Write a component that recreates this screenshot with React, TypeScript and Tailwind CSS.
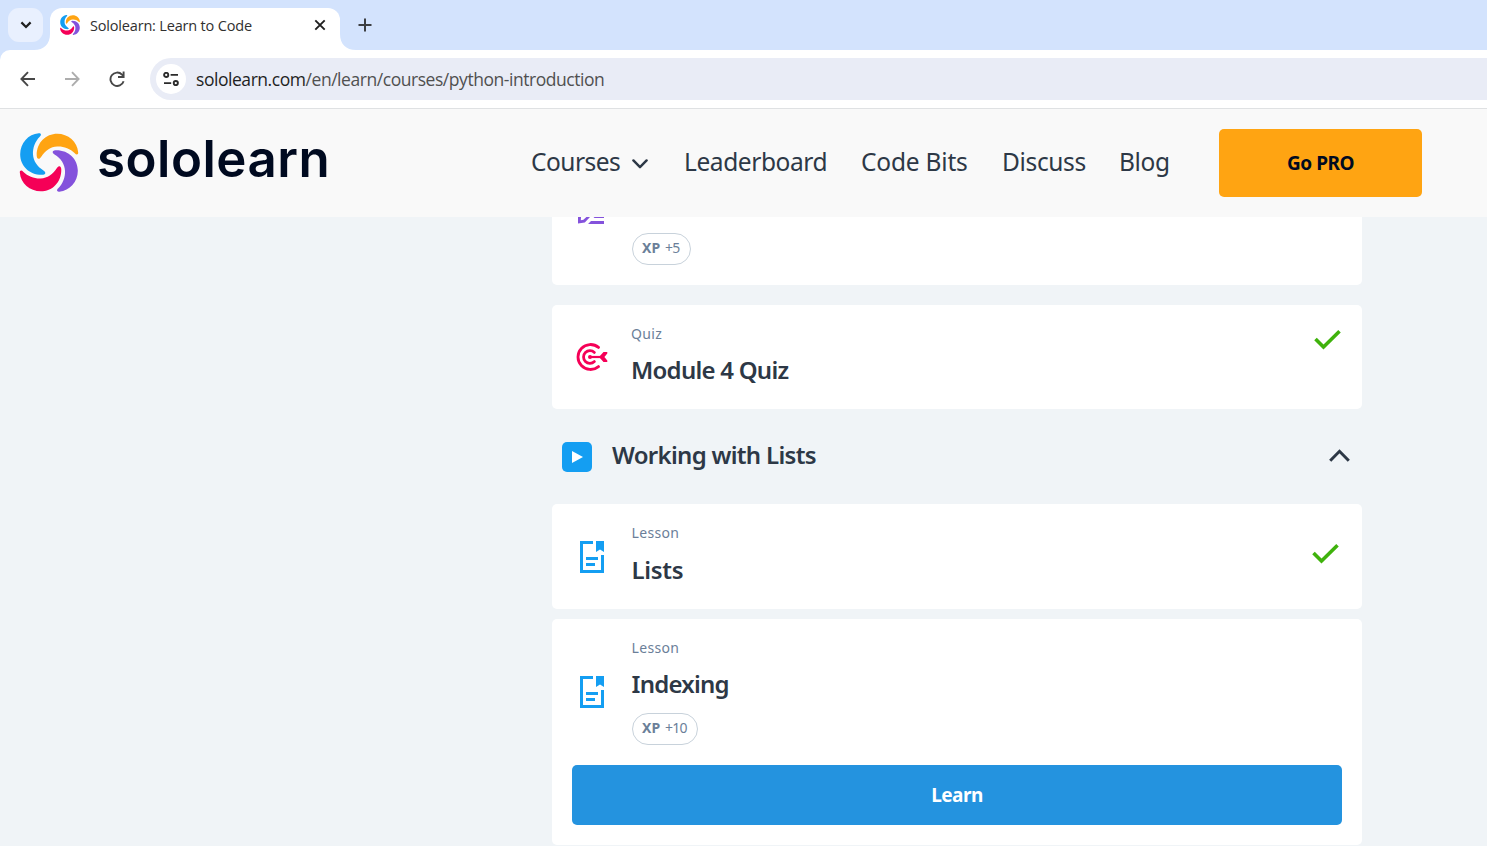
import type { ReactNode } from "react";

const PETAL =
  "M51 66 C51 28 78 2 112 2 C144 2 172 26 174 57 C175 64 169 66 164 60 C150 46 130 39 112 40 C92 41 76 52 64 71 C58 80 51 78 51 66Z";

function Swirl({ className }: { className: string }) {
  return (
    <svg viewBox="0 0 175 175" className={className}>
      <path d={PETAL} fill="#ffa412" />
      <path d={PETAL} fill="#8452dc" transform="rotate(90 87.5 87.5)" />
      <path d={PETAL} fill="#f50057" transform="rotate(180 87.5 87.5)" />
      <path d={PETAL} fill="#149ef2" transform="rotate(270 87.5 87.5)" />
    </svg>
  );
}

function TabStrip() {
  return (
    <div className="flex h-[50px] shrink-0 bg-[#d3e3fd] pl-2 pt-2">
      <button className="flex h-[34px] w-[35px] items-center justify-center rounded-[11px] bg-[#e9f0fe]">
        <svg viewBox="0 0 12 8" className="h-2 w-3" fill="none" stroke="#1f1f1f" strokeWidth="2.2">
          <path d="M1.4 1.4 6 6l4.6-4.6" />
        </svg>
      </button>
      <div className="flex h-[42px] items-end">
        <svg viewBox="0 0 16 16" className="ml-[-9px] h-4 w-4" fill="#fff">
          <path d="M16 0V16H0C10 16 16 10 16 0Z" />
        </svg>
      </div>
      <div className="flex h-[42px] w-[290px] items-center rounded-t-[12px] bg-white pb-[8px] pl-[10px]">
        <Swirl className="h-5 w-5" />
        <span className="ml-[10px] w-[200px] whitespace-nowrap pt-px font-['Open_Sans',sans-serif] text-[14.5px] tracking-[-0.18px] text-[#303030]">
          Sololearn: Learn to Code
        </span>
        <svg viewBox="0 0 12 12" className="ml-6 h-3 w-3" fill="none" stroke="#1f1f1f" strokeWidth="1.9">
          <path d="M1.3 1.3 10.7 10.7M10.7 1.3 1.3 10.7" />
        </svg>
      </div>
      <div className="flex h-[42px] items-end">
        <svg viewBox="0 0 16 16" className="h-4 w-4" fill="#fff">
          <path d="M0 0V16H16C6 16 0 10 0 0Z" />
        </svg>
      </div>
      <svg viewBox="0 0 14 14" className="ml-[2px] mt-[10px] h-[14px] w-[14px]" fill="none" stroke="#3c3f43" strokeWidth="2">
        <path d="M7 .5v13M.5 7h13" />
      </svg>
    </div>
  );
}

function Toolbar() {
  return (
    <div className="h-[59px] shrink-0 bg-[#d3e3fd]">
      <div className="flex h-[59px] items-start rounded-tl-[10px] border-b border-[#dfe1e3] bg-white pl-5 pt-2">
        <svg viewBox="0 0 16 16" className="mt-[12.5px] h-4 w-4" fill="none" stroke="#474747" strokeWidth="1.9">
          <path d="M15 8H1.8M8 1.2 1.4 8 8 14.8" />
        </svg>
        <svg viewBox="0 0 16 16" className="ml-7 mt-[12.5px] h-4 w-4" fill="none" stroke="#adadad" strokeWidth="1.9">
          <path d="M1 8h13.2M8 1.2 14.6 8 8 14.8" />
        </svg>
        <svg viewBox="0 0 16 16" className="ml-[29px] mt-[12.5px] h-4 w-4" fill="none" stroke="#474747" strokeWidth="1.9">
          <path d="M14.6 10.2A6.7 6.7 0 1 1 13 3.6L14.4 5M14.6.4V6H9" />
        </svg>
        <div className="ml-[25px] flex h-[42px] flex-1 items-center rounded-l-full bg-[#e9ecf6] pl-[6px]">
          <div className="flex h-[30px] w-[30px] items-center justify-center rounded-full bg-white">
            <svg viewBox="0 0 16 14" className="h-[14px] w-4" fill="none" stroke="#2b2b2b" strokeWidth="1.9">
              <circle cx="3.2" cy="2.9" r="2.1" />
              <path d="M7.6 2.9H15M1 11.1H8.2" />
              <circle cx="12.8" cy="11.1" r="2.1" />
            </svg>
          </div>
          <span className="ml-[10px] whitespace-nowrap font-['Open_Sans',sans-serif] text-[17.5px] tracking-[-0.45px] text-[#505050]">
            <span className="text-[#1f1f1f]">sololearn.com</span>/en/learn/courses/python-introduction
          </span>
        </div>
      </div>
    </div>
  );
}

function SiteHeader() {
  return (
    <header className="flex h-[108px] shrink-0 items-center bg-[#f9f9f9] pl-[19px]">
      <Swirl className="mt-[-1px] h-[59px] w-[60px]" />
      <span className="ml-[18px] mt-[-9px] w-[434px] whitespace-nowrap font-[Inter,sans-serif] text-[51px] font-semibold leading-none tracking-[0.5px] text-[#000a20]">
        sololearn
      </span>
      <nav className="mt-[-2px] flex w-[688px] items-center whitespace-nowrap font-['Noto_Sans',sans-serif] text-[24.5px] tracking-[-0.35px] text-[#2d3846]">
        <span className="w-[101px] tracking-[-0.5px]">Courses</span>
        <svg viewBox="0 0 16 10" className="mt-[3px] h-[10px] w-4" fill="none" stroke="#2d3846" strokeWidth="2.4" strokeLinecap="round" strokeLinejoin="round">
          <path d="M1.4 1.4 8 8.2l6.6-6.8" />
        </svg>
        <span className="ml-9 w-[177px] tracking-[-0.42px]">Leaderboard</span>
        <span className="w-[141px] tracking-[-0.2px]">Code Bits</span>
        <span className="w-[117px]">Discuss</span>
        <span>Blog</span>
      </nav>
      <button className="flex h-[68px] w-[203px] items-center justify-center rounded-[5px] bg-[#ffa412] font-['Noto_Sans',sans-serif] text-[19px] font-bold tracking-[-0.5px] text-[#000a20]">
        Go PRO
      </button>
    </header>
  );
}

function XpPill({ amount, className }: { amount: string; className: string }) {
  return (
    <div className={`flex h-8 items-center gap-[5px] rounded-[16px] border border-[#c8d2db] pb-[2px] pl-[9px] font-['Noto_Sans',sans-serif] text-[14px] leading-none text-[#6b7f99] ${className}`}>
      <span className="font-bold">XP</span>
      <span className="tracking-[-0.8px]">{amount}</span>
    </div>
  );
}

function Check() {
  return (
    <svg viewBox="0 0 27 20" className="h-5 w-[27px]" fill="none" stroke="#3fb20c" strokeWidth="3.6">
      <path d="M1.5 9 9.5 17 25.5 1.3" />
    </svg>
  );
}

function LessonIcon() {
  return (
    <svg viewBox="0 0 24 32" className="h-8 w-6" fill="none" stroke="#149ef2" strokeWidth="3">
      <path d="M13 1.5H1.5V30.5H22.5V14M6 17.5H18M6 23.5H15" />
      <path d="M16 0H24V11L20 8.5L16 11Z" fill="#149ef2" stroke="none" />
    </svg>
  );
}

function QuizIcon() {
  return (
    <svg viewBox="0 0 32 28" className="ml-[-0.5px] h-7 w-8" fill="none" stroke="#f50057" strokeWidth="2.8">
      <path d="M22.5 4.4A12.5 12.5 0 1 0 22.5 23.6" strokeLinecap="round" />
      <path d="M18.4 9.4A6.4 6.4 0 1 0 18.4 18.6" strokeLinecap="round" />
      <path d="M14 14H26" strokeWidth="2.2" />
      <circle cx="14" cy="14" r="2" fill="#f50057" stroke="none" />
      <path d="M23 14 27.5 9H31.3V10.6L28.4 14L31.3 17.4V19H27.5Z" fill="#f50057" stroke="none" />
    </svg>
  );
}

function CardText({ kind, title }: { kind: string; title: ReactNode }) {
  return (
    <div className="ml-[-0.5px] whitespace-nowrap font-['Noto_Sans',sans-serif]">
      <div className="text-[14px] leading-5 tracking-[0.35px] text-[#6b7f99]">{kind}</div>
      <div className="mt-[10px] text-[24px] font-semibold leading-8 tracking-[-0.75px] text-[#2d3846]">{title}</div>
    </div>
  );
}

export default function App() {
  return (
    <div className="flex h-[846px] w-full flex-col overflow-hidden bg-[#f0f4f7]">
      <TabStrip />
      <Toolbar />
      <SiteHeader />
      <main className="ml-[552px] flex w-[810px] flex-1 flex-col">
        <section className="h-[68px] shrink-0 rounded-b-[5px] bg-white">
          <div className="flex items-start pl-[26px]">
            <svg viewBox="0 0 27 7" className="h-[7px] w-[27px]" fill="#8452dc">
              <path d="M0 0H3L2.8 3.2L5.4 2.8L8.4 0H12L6.8 5.4L0 6.6Z" />
              <path d="M16.5 0H26V1H15.5ZM13 4H26V7H10Z" />
            </svg>
            <XpPill amount="+5" className="ml-[27px] mt-4 w-[59px]" />
          </div>
        </section>
        <section className="mt-5 flex h-[104px] shrink-0 items-start rounded-[5px] bg-white pl-6">
          <div className="mr-6 mt-[38px]">
            <QuizIcon />
          </div>
          <div className="mt-[19px] w-[682px]">
            <CardText kind="Quiz" title="Module 4 Quiz" />
          </div>
          <div className="mt-[25px]">
            <Check />
          </div>
        </section>
        <section className="flex h-[95px] shrink-0 items-center pl-[10px]">
          <div className="flex h-[30px] w-[30px] items-center justify-center rounded-[5px] bg-[#149ef2]">
            <svg viewBox="0 0 11 12" className="h-3 w-[11px]" fill="#fff">
              <path d="M0 0 11 6 0 12Z" />
            </svg>
          </div>
          <h2 className="ml-5 mt-[-3px] w-[717px] whitespace-nowrap font-['Noto_Sans',sans-serif] text-[24px] font-semibold tracking-[-0.7px] text-[#2d3846]">
            Working with Lists
          </h2>
          <svg viewBox="0 0 21 13" className="mt-[-3px] h-[13px] w-[21px]" fill="none" stroke="#2d3846" strokeWidth="3">
            <path d="M1.2 11.7 10.5 2.3 19.8 11.7" />
          </svg>
        </section>
        <section className="flex h-[105px] shrink-0 items-start rounded-[5px] bg-white pl-7">
          <div className="mr-7 mt-[37px]">
            <LessonIcon />
          </div>
          <div className="mt-[19px] w-[680px]">
            <CardText kind="Lesson" title={<span className="inline-block pt-px tracking-[-0.3px]">Lists</span>} />
          </div>
          <div className="mt-[40px]">
            <Check />
          </div>
        </section>
        <section className="mt-[10px] h-[226px] shrink-0 rounded-[5px] bg-white">
          <div className="flex h-[146px] items-start pl-7">
            <div className="mr-7 mt-[57px]">
              <LessonIcon />
            </div>
            <div className="mt-[19px]">
              <CardText kind="Lesson" title="Indexing" />
              <XpPill amount="+10" className="mt-[13px] w-[66px]" />
            </div>
          </div>
          <button className="mx-5 flex h-[60px] w-[770px] items-center justify-center rounded-[5px] bg-[#2493df] font-['Noto_Sans',sans-serif] text-[19px] font-bold tracking-[-0.5px] text-white">
            Learn
          </button>
        </section>
      </main>
    </div>
  );
}
